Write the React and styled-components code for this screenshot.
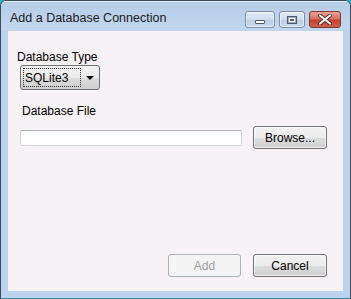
import styled, { createGlobalStyle } from "styled-components";

const Global = createGlobalStyle`
    html, body {
        margin: 0;
        padding: 0;
        background: #2ab7c9;
    }
    * { box-sizing: border-box; }
`

export default function App(){
    return(
        <>
            <Global />
            <Window>
                <TitleBar>
                    <Title>Add a Database Connection</Title>
                    <Controls>
                        <CaptionButton>
                            <MinGlyph />
                        </CaptionButton>
                        <CaptionButton narrow>
                            <MaxGlyph />
                        </CaptionButton>
                        <CloseButton>
                            <svg width="16" height="11" viewBox="0 0 16 11">
                                <path d="M3 1.5 L13 9.5 M13 1.5 L3 9.5" stroke="#5a2a26" strokeWidth="4" strokeLinecap="round" />
                                <path d="M3 1.5 L13 9.5 M13 1.5 L3 9.5" stroke="#ffffff" strokeWidth="2.2" strokeLinecap="round" />
                            </svg>
                        </CloseButton>
                    </Controls>
                </TitleBar>
                <Client>
                    <Label>Database Type</Label>
                    <Combo>
                        <ComboValue>SQLite3</ComboValue>
                        <Arrow />
                    </Combo>
                    <Label indent>Database File</Label>
                    <FileRow>
                        <TextInput />
                        <Button>Browse...</Button>
                    </FileRow>
                    <Actions>
                        <Button disabled>Add</Button>
                        <Button>Cancel</Button>
                    </Actions>
                </Client>
            </Window>
        </>
    )
}

const Window = styled.div`
    display: flex;
    flex-direction: column;
    width: 351px;
    height: 299px;
    border: 1px solid #3d4b5e;
    border-bottom-color: #2f8fa0;
    border-radius: 6px 6px 0 0;
    background: #bdd3ed;
    font-family: 'Liberation Sans', Arial, sans-serif;
    font-size: 12px;
    color: #000;
    overflow: hidden;
`
const TitleBar = styled.div`
    display: flex;
    align-items: flex-start;
    justify-content: space-between;
    height: 29px;
    padding: 9px 9px 0 9px;
    background: linear-gradient(#b6cde8, #c2d7ef);
    border-top: 1px solid #e6eef8;
`
const Title = styled.span`
    font-size: 12.5px;
    color: #1a1a1a;
    line-height: 14px;
`
const Controls = styled.div`
    display: flex;
    gap: 4px;
`
const CaptionButton = styled.div`
    display: flex;
    align-items: center;
    justify-content: center;
    width: ${props => props.narrow ? "26px" : "30px"};
    height: 17px;
    border: 1px solid #7a8ca6;
    border-radius: 3px;
    background: linear-gradient(#e4edf8 0%, #cfdcee 50%, #bccde4 51%, #c8d8ec 100%);
    box-shadow: inset 0 0 0 1px rgba(255,255,255,0.5);
`
const MinGlyph = styled.div`
    width: 10px;
    height: 4px;
    margin-top: 5px;
    background: #fff;
    border: 1px solid #4c5a6e;
    border-radius: 1px;
`
const MaxGlyph = styled.div`
    width: 10px;
    height: 8px;
    border: 1px solid #4c5a6e;
    background: #fff;
    box-shadow: inset 0 0 0 1px #9aa7b9;
    position: relative;
    &::after {
        content: "";
        position: absolute;
        left: 2px;
        top: 2px;
        width: 4px;
        height: 2px;
        background: #4c5a6e;
    }
`
const CloseButton = styled.div`
    display: flex;
    align-items: center;
    justify-content: center;
    width: 32px;
    height: 17px;
    border: 1px solid #7b3a32;
    border-radius: 3px;
    background: linear-gradient(#e9a594 0%, #d7705f 45%, #c8412f 55%, #d0604a 100%);
`
const Client = styled.div`
    flex: 1;
    display: flex;
    flex-direction: column;
    margin: 1px 7px 7px 7px;
    padding: 19px 16px 14px 9px;
    background: #f7f2f6;
`
const Label = styled.div`
    line-height: 14px;
    margin-left: ${props => props.indent ? "5px" : "0"};
    margin-bottom: ${props => props.indent ? "8px" : "1px"};
    margin-top: ${props => props.indent ? "14px" : "0"};
`
const Combo = styled.div`
    display: flex;
    align-items: center;
    width: 80px;
    height: 25px;
    margin-left: 3px;
    padding: 2px;
    border: 1px solid #707070;
    border-radius: 3px;
    background: linear-gradient(#f2f2f2 0%, #ebebeb 50%, #dddddd 51%, #cfcfcf 100%);
`
const ComboValue = styled.div`
    display: flex;
    align-items: center;
    width: 58px;
    height: 19px;
    padding-left: 1px;
    border: 1px dotted #333;
`
const Arrow = styled.div`
    width: 0;
    height: 0;
    margin-left: 5px;
    border-left: 4px solid transparent;
    border-right: 4px solid transparent;
    border-top: 4px solid #000;
`
const FileRow = styled.div`
    display: flex;
    align-items: center;
    justify-content: space-between;
    margin-left: 3px;
`
const TextInput = styled.div`
    width: 222px;
    height: 16px;
    border: 1px solid #d2d5da;
    border-top-color: #abadb3;
    border-radius: 2px;
    background: #fff;
`
const Button = styled.button`
    width: ${props => props.disabled ? "73px" : "74px"};
    height: 23px;
    padding: 0;
    border: 1px solid ${props => props.disabled ? "#adb2b5" : "#707070"};
    border-radius: 3px;
    background: ${props => props.disabled
        ? "#f4f4f4"
        : "linear-gradient(#f2f2f2 0%, #ebebeb 50%, #dddddd 51%, #cfcfcf 100%)"};
    box-shadow: ${props => props.disabled ? "none" : "inset 0 0 0 1px rgba(255,255,255,0.7)"};
    color: ${props => props.disabled ? "#a0a0a0" : "#000"};
    font-family: 'Liberation Sans', Arial, sans-serif;
    font-size: 12px;
`
const Actions = styled.div`
    display: flex;
    justify-content: flex-end;
    gap: 12px;
    margin-top: auto;
`
